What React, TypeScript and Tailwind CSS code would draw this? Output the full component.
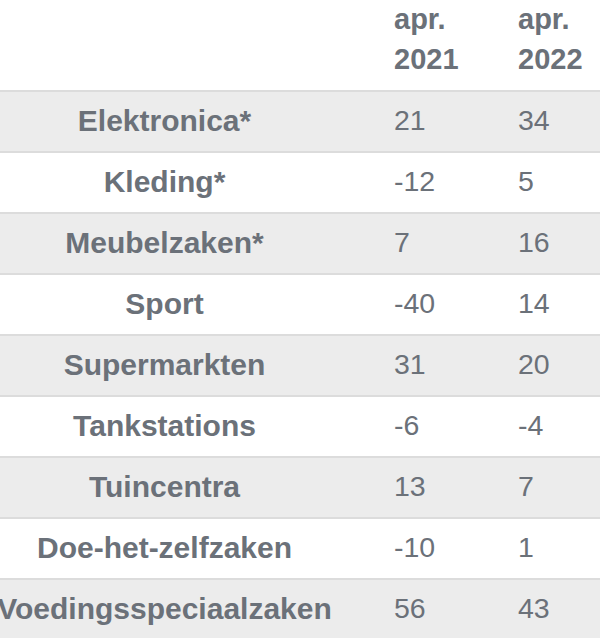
const rows = [
  { name: "Elektronica*", a: "21", b: "34" },
  { name: "Kleding*", a: "-12", b: "5" },
  { name: "Meubelzaken*", a: "7", b: "16" },
  { name: "Sport", a: "-40", b: "14" },
  { name: "Supermarkten", a: "31", b: "20" },
  { name: "Tankstations", a: "-6", b: "-4" },
  { name: "Tuincentra", a: "13", b: "7" },
  { name: "Doe-het-zelfzaken", a: "-10", b: "1" },
  { name: "Voedingsspeciaalzaken", a: "56", b: "43" },
];

export default function App() {
  return (
    <div className="w-[600px] h-[638px] overflow-hidden bg-white text-[#6b7179] font-['Liberation_Sans',Arial,sans-serif]">
      <div className="grid grid-cols-[329px_124px_1fr] h-[90px] text-[29px] font-bold leading-[40px]">
        <div />
        <div className="pl-[65px] -mt-[1px]">
          apr.
          <br />
          2021
        </div>
        <div className="pl-[65px] -mt-[1px]">
          apr.
          <br />
          2022
        </div>
      </div>
      {rows.map((r, i) => (
        <div
          key={i}
          className={`grid grid-cols-[329px_124px_1fr] h-[61px] items-center pb-[3px] border-t-2 border-[#dcdcdc] text-[28.5px] ${
            i % 2 === 0 ? "bg-[#ececec]" : "bg-white"
          }`}
        >
          <div className="flex justify-center whitespace-nowrap font-bold text-[30px]">{r.name}</div>
          <div className="pl-[65px]">{r.a}</div>
          <div className="pl-[65px]">{r.b}</div>
        </div>
      ))}
    </div>
  );
}
